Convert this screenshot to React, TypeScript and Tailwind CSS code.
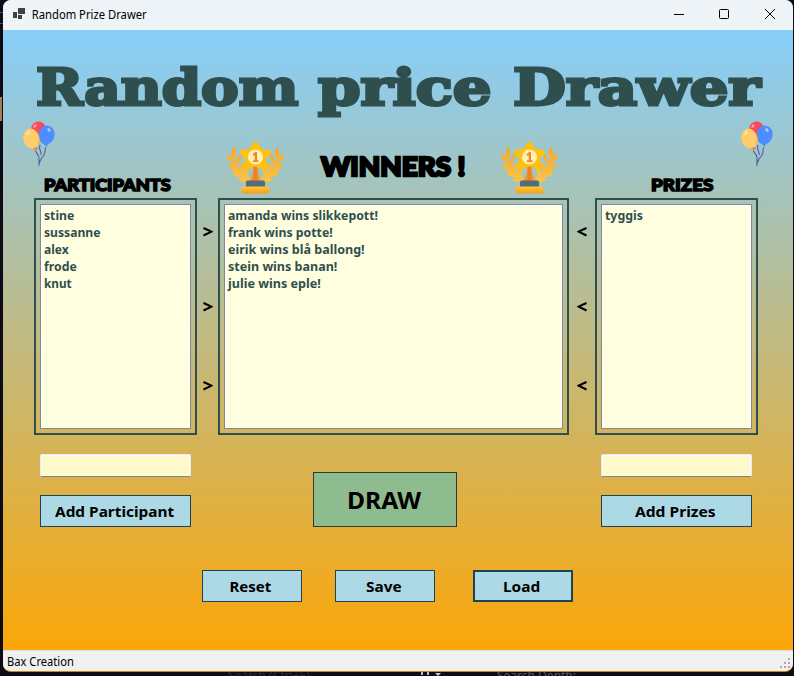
import { useLayoutEffect, useRef, useState } from 'react';

function Fit({ text, width, className = '' }: { text: string; width: number; className?: string }) {
  const ref = useRef<HTMLSpanElement>(null);
  const [scale, setScale] = useState(1);
  useLayoutEffect(() => {
    if (ref.current) setScale(width / ref.current.offsetWidth);
  }, [width]);
  return (
    <span className="block shrink-0" style={{ width }}>
      <span className="block w-max origin-left" style={{ transform: `scaleX(${scale})` }}>
        <span ref={ref} className={`block w-max whitespace-pre ${className}`}>{text}</span>
      </span>
    </span>
  );
}

const ui = 'font-["Noto_Sans",sans-serif]';
const titleFont = 'font-["DejaVu_Serif",serif] font-bold text-[51px] leading-[62px] text-[#2f4f4f] [-webkit-text-stroke:3px_#2f4f4f] [stroke-linejoin:round]';
const headFont = 'font-["Lato",sans-serif] font-black text-black';

function Balloons() {
  return (
    <svg className="h-[46px] w-[34px]" viewBox="0 0 34 46" fill="none">
      <g stroke="#5658a5" strokeWidth="1.1">
        <path d="M12 28c0 4 5 6 4 10v7M23 26c-2 3 0 5-2 8s-4 4-4.500 8M17 24c-2 5 2 6 1 10" />
      </g>
      <ellipse cx="15.500" cy="8.500" rx="7.500" ry="8" fill="#f64b5b" />
      <path d="M21 24l2-2 2 3zM11 29l1-3 3 2z" fill="#367be9" />
      <ellipse cx="23.500" cy="14" rx="8" ry="9.500" transform="rotate(12 23.500 14)" fill="#4c8dff" />
      <ellipse cx="8.300" cy="17.500" rx="8" ry="10" transform="rotate(-14 8.300 17.500)" fill="#ffcd6b" />
      <path d="M10 30l1-4 4 3z" fill="#f99a38" />
      <path d="M14 23c2-3 2-7 0-11 3 4 4 8 1 12z" fill="#ffb63e" />
      <ellipse cx="12" cy="5" rx="1.300" ry="2" transform="rotate(35 12 5)" fill="#ff9ca5" />
      <ellipse cx="26" cy="9" rx="1.400" ry="2.200" transform="rotate(-35 26 9)" fill="#a6c7ff" />
      <ellipse cx="5" cy="12" rx="1.300" ry="2.500" transform="rotate(25 5 12)" fill="#ffe2a6" />
    </svg>
  );
}

function Branch() {
  return (
    <g fill="url(#gold)">
      <path d="M6 12Q3 29 19 37l4-1Q9 28 7 12z" />
      <path d="M7 4Q2.500 11 7 16q4.500-5 0-12zM0 12q0 8 8 8-1-7-8-8zM1 21q1 8 10 8-2-7-10-8zM5 30q3 7 12 5-4-7-12-5zM11 38q6 4.500 13-1-7-4-13 1z" />
      <path d="M14 12q-6 4-5 10 6-2 5-10zM17 20q-7 4-5 10 7-2 5-10zM21 27q-7 2-5 9 7-2 5-9z" />
    </g>
  );
}

function Trophy() {
  return (
    <svg className="h-[52px] w-[58px]" viewBox="0 0 58 52">
      <defs>
        <linearGradient id="gold" x1="0" y1="0" x2="0" y2="1">
          <stop stopColor="#f9a62b" /><stop offset="1" stopColor="#ffc43d" />
        </linearGradient>
        <linearGradient id="stem" x1="0" y1="0" x2="1" y2="0">
          <stop stopColor="#ffa51f" /><stop offset=".5" stopColor="#f37c27" /><stop offset="1" stopColor="#ffad27" />
        </linearGradient>
        <linearGradient id="base" x1="0" y1="0" x2="0" y2="1">
          <stop stopColor="#ffca28" /><stop offset="1" stopColor="#f89c25" />
        </linearGradient>
      </defs>
      <Branch />
      <g transform="translate(57 0) scale(-1 1)"><Branch /></g>
      <path d="M26.500 24h4l1 9 3 6h-12l3-6z" fill="url(#stem)" />
      <path transform="translate(-.5 0)" d="M27.200 1.500q1.800-2.500 3.600 0l3.500 6 8 1.200q2.600.7 1 2.800l-5 5 2 9q0 2.500-2.500 1.500L29 23.500l-8.800 3.500q-2.500 1-2.500-1.500l2-9-5-5q-1.600-2.100 1-2.800l8-1.200z" fill="#ffc10d" stroke="#ffc10d" strokeWidth="1.500" />
      <circle cx="28.500" cy="15" r="7.600" fill="#fff0b4" />
      <path d="M25.700 12l2.500-2H30v8.300h1.500V20H26v-1.700h1.700v-5.200l-1.500.8z" fill="#f68624" />
      <rect x="19" y="38.500" width="19" height="8" rx="1.500" fill="#536b7b" />
      <rect x="14.500" y="44.500" width="28" height="7" rx="2.500" fill="url(#base)" />
    </svg>
  );
}

function ListBox({ items, className = '' }: { items: [string, number][]; className?: string }) {
  return (
    <div className={`h-[237px] shrink-0 border-2 border-[#2f4f4f] p-1 ${className}`}>
      <div className="h-full border border-[#828790] bg-[#ffffe0] pl-[3px] pt-[2px] shadow-[inset_0_0_0_1px_white]">
        {items.map(([text, width]) => (
          <Fit key={text} text={text} width={width} className={`${ui} h-[17px] text-[13px] font-bold leading-[17px] text-[#2f4f4f]`} />
        ))}
      </div>
    </div>
  );
}

function Arrows({ right = false }: { right?: boolean }) {
  return (
    <div className={`flex shrink-0 flex-col pt-[29px] ${right ? 'w-[21px] pl-[6px]' : 'w-[26px] pl-[8px]'}`}>
      {['h-[75px]', 'h-[79px]', 'h-[20px]'].map((h) => (
        <div key={h} className={`${h} shrink-0`}>
          <svg className="h-[10px] w-[10px]" viewBox="0 0 10 10" fill="none" stroke="black" strokeWidth="2">
            <path d={right ? 'M0.500 1l8 3.700-8 3.800' : 'M9.500 1l-8 3.700 8 3.800'} />
          </svg>
        </div>
      ))}
    </div>
  );
}

function Button({ label, width, className = '' }: { label: string; width: number; className?: string }) {
  return (
    <button className={`flex h-8 shrink-0 items-center justify-center border border-[#1e4352] bg-[#add8e6] pr-[3px] text-black ${className}`}>
      <Fit text={label} width={width} className={`${ui} text-[15px] font-bold leading-[20px]`} />
    </button>
  );
}

function Entry() {
  return <div className="h-[23px] w-[151px] rounded-[2px] border border-[#e8e8ee] border-b-[#858277] bg-[#fffacd] shadow-[inset_0_0_0_1px_#fffdf0]" />;
}

export default function App() {
  return (
    <div className="relative h-[676px] w-[794px] overflow-hidden bg-[#0c0b16] pl-[3px]">
      <div className="absolute left-0 top-[97px] h-[24px] w-[2px] bg-[#a87c53]" />
      <div className="absolute left-0 top-[12px] h-[12px] w-[3px] border-y border-[#315a83]" />
      <div className={`absolute left-[228px] top-[668px] text-[12px] leading-[16px] text-[#2b2b36] ${ui}`}>Search (Ctrl+E)</div>
      <div className={`absolute left-[497px] top-[668px] text-[12px] leading-[16px] text-[#555561] ${ui}`}>Search Depth:</div>
      <div className="absolute left-[421px] top-[672px] h-[3px] w-[8px] border-x-2 border-[#bbb]" />
      <div className="absolute left-[435px] top-[673px] border-x-[3px] border-t-[3px] border-x-transparent border-t-[#ccc]" />

      <main className="relative flex h-[672px] w-[790px] flex-col overflow-hidden rounded-[8px] border-b border-b-[#c98510] bg-[linear-gradient(to_bottom,#87cefa_30px,#ffa500_672px)]">
        <header className="flex h-[30px] shrink-0 items-center bg-[#eff4f9] pl-[10px]">
          <svg className="mb-[2px] h-[12px] w-[13px]" viewBox="0 0 13 12" fill="#414141">
            <path d="M0 4h4v6H0zM5 0h7v6H5zM5 7h4v4H5z" />
          </svg>
          <Fit text=" Random Prize Drawer" width={118} className={`${ui} ml-[3px] text-[12px] leading-[20px] text-black`} />
          <svg className="mb-[2px] ml-auto mr-[17px] h-[12px] w-[103px]" viewBox="0 0 103 12" fill="none" stroke="black">
            <path d="M1 6.500h10M92 1l10 10M102 1L92 11" />
            <rect x="46.500" y="1.500" width="9" height="9" rx="1" />
          </svg>
        </header>

        <h1 className="flex h-[90px] shrink-0 pl-[33px] pt-[26px]">
          <Fit text="Random" width={262} className={titleFont} />
          <span className="w-[20px] shrink-0" />
          <Fit text="price" width={173} className={titleFont} />
          <span className="w-[22px] shrink-0" />
          <Fit text="Drawer" width={247} className={titleFont} />
        </h1>

        <section className="flex h-[78px] shrink-0">
          <div className="w-[194px] pl-[20px] pt-px">
            <Balloons />
            <div className="pl-[21px] pt-[8px]">
              <Fit text="PARTICIPANTS" width={127} className={`${headFont} text-[17px] leading-[20px] [-webkit-text-stroke:1.5px_black]`} />
            </div>
          </div>
          <div className="flex w-[394px] pl-[30px] pt-[22px]">
            <Trophy />
            <div className="ml-[36px] mr-[35px] pt-[8px]">
              <Fit text="WINNERS !" width={145} className={`${headFont} text-[27px] leading-[32px] [-webkit-text-stroke:2.5px_black]`} />
            </div>
            <Trophy />
          </div>
          <div className="flex-1 pt-px">
            <div className="pl-[150px]"><Balloons /></div>
            <div className="pl-[60px] pt-[8px]">
              <Fit text="PRIZES" width={62} className={`${headFont} text-[17px] leading-[20px] [-webkit-text-stroke:1.5px_black]`} />
            </div>
          </div>
        </section>

        <section className="flex h-[237px] shrink-0 pl-[31px]">
          <ListBox className="w-[163px]" items={[['stine', 30], ['sussanne', 56], ['alex', 25], ['frode', 33], ['knut', 28]]} />
          <Arrows right />
          <ListBox className="w-[351px]" items={[['amanda wins slikkepott!', 150], ['frank wins potte!', 105], ['eirik wins blå ballong!', 137], ['stein wins banan!', 109], ['julie wins eple!', 93]]} />
          <Arrows />
          <ListBox className="w-[163px]" items={[['tyggis', 38]]} />
        </section>

        <section className="flex h-[135px] shrink-0 justify-between pl-[37px] pr-[41px] pt-[19px]">
          <div className="flex flex-col gap-[18px]">
            <Entry />
            <Button label="Add Participant" width={119} className="w-[151px]" />
          </div>
          <button className="mr-[22px] mt-[18px] flex h-[55px] w-[144px] items-center justify-center border border-[#263f2c] bg-[#8fbc8f] pr-[3px] text-black">
            <Fit text="DRAW" width={74} className={`${ui} text-[24px] font-bold leading-[32px]`} />
          </button>
          <div className="flex flex-col gap-[18px]">
            <Entry />
            <Button label="Add Prizes" width={81} className="w-[151px]" />
          </div>
        </section>

        <section className="flex h-[80px] shrink-0 pl-[199px]">
          <Button label="Reset" width={42} className="w-[100px]" />
          <Button label="Save" width={36} className="ml-[33px] w-[100px]" />
          <Button label="Load" width={37} className="ml-[38px] w-[100px] border-2" />
        </section>

        <footer className="flex h-[21px] shrink-0 items-center justify-between border-t border-[#d7dce5] bg-[#f0f0f0] pl-[4px] pr-[2px]">
          <Fit text="Bax Creation" width={67} className={`${ui} pt-px text-[12px] leading-[18px] text-black`} />
          <svg className="mt-[4px] h-[11px] w-[11px]" viewBox="0 0 11 11" fill="#aaa">
            <path d="M8 0h2v2H8zM8 4h2v2H8zM8 8h2v2H8zM4 4h2v2H4zM4 8h2v2H4zM0 8h2v2H0z" />
          </svg>
        </footer>
      </main>
    </div>
  );
}
